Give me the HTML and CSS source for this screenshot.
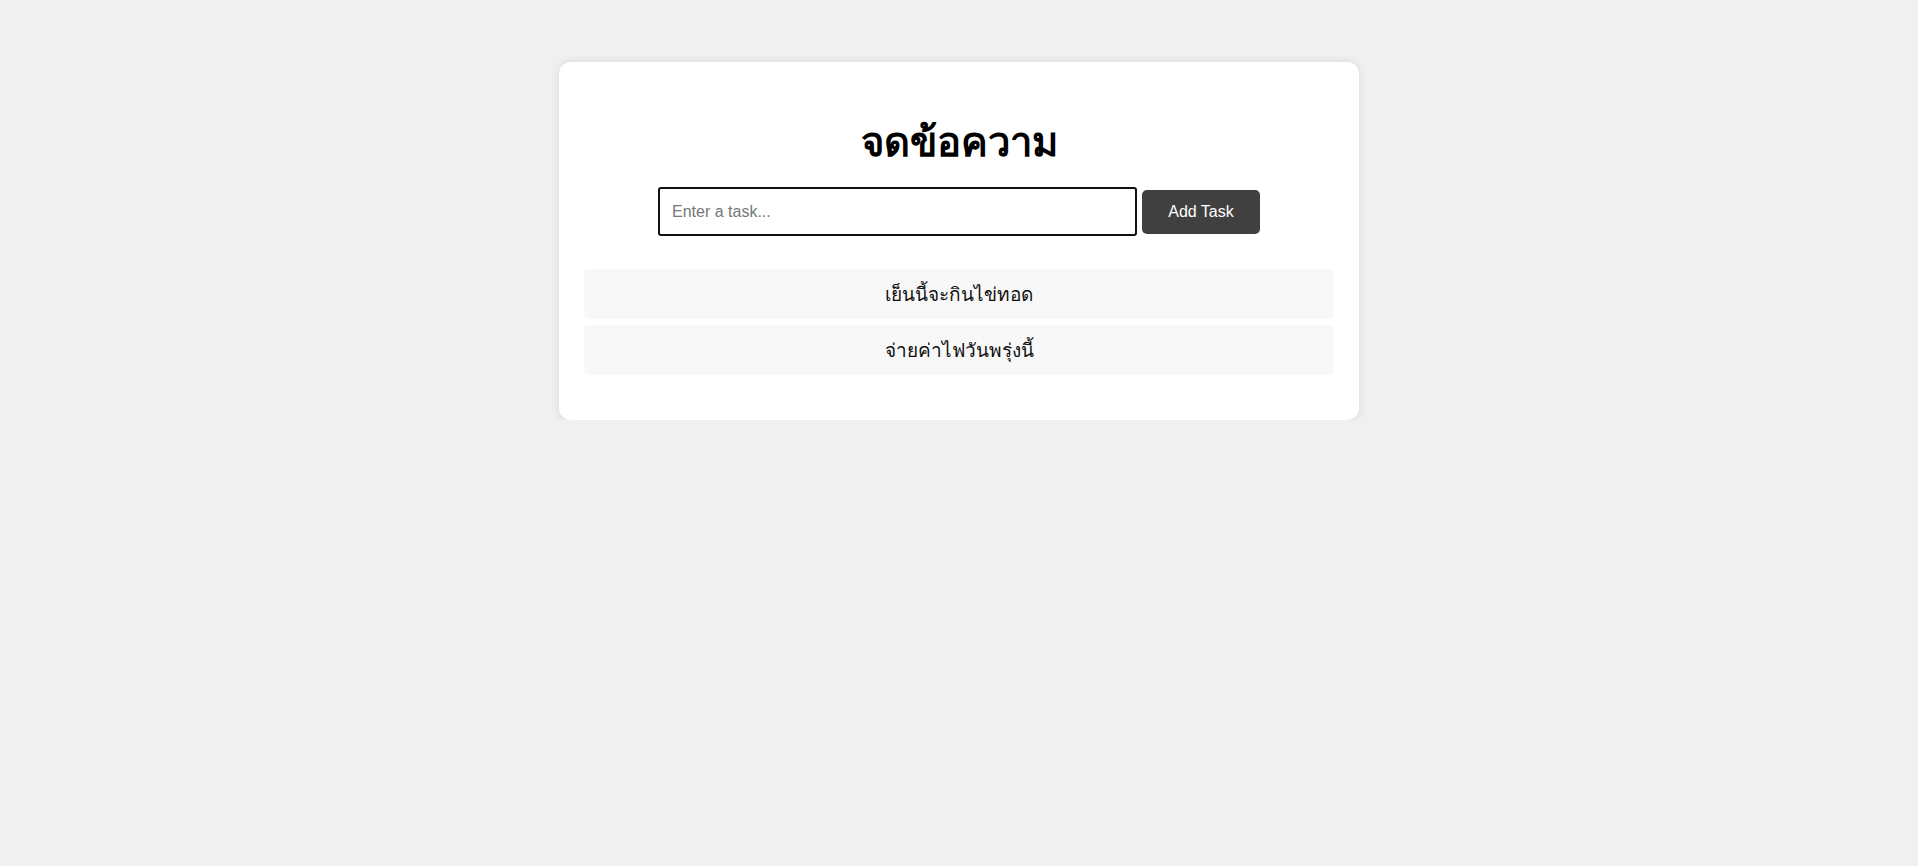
FILE: index.html
```html
<!DOCTYPE html>
<html lang="th">
<head>
<meta charset="utf-8">
<title>จดข้อความ</title>
<link rel="stylesheet" href="styles.css">
</head>
<body>
<main class="card">
  <h1 class="title">จดข้อความ</h1>
  <div class="form-row">
    <input class="task-input" type="text" placeholder="Enter a task...">
    <button class="add-btn" type="button">Add Task</button>
  </div>
  <ul class="task-list">
    <li class="task-item">เย็นนี้จะกินไข่ทอด</li>
    <li class="task-item">จ่ายค่าไฟวันพรุ่งนี้</li>
  </ul>
</main>
</body>
</html>
```

FILE: styles.css
```css
* { box-sizing: border-box; }
body {
  margin: 0;
  padding-top: 62px;
  background: #f0f0f0;
  font-family: "Liberation Sans", Arial, sans-serif;
}
.card {
  width: 800px;
  margin: 0 auto;
  background: #ffffff;
  border-radius: 12px;
  box-shadow: 0 0 10px rgba(0, 0, 0, 0.1);
  padding: 25px 25px 45px;
}
.title {
  margin: 32px 0 22px;
  text-align: center;
  font-size: 40px;
  font-weight: bold;
  color: #000;
  line-height: 1.15;
}
.form-row {
  display: flex;
  justify-content: center;
  align-items: center;
  gap: 5px;
}
.task-input {
  width: 479px;
  height: 49px;
  padding: 0 12px;
  border: 2px solid #111;
  border-radius: 3px;
  font-family: "Liberation Sans", Arial, sans-serif;
  font-size: 16px;
  outline: none;
}
.task-input::placeholder { color: #777; }
.add-btn {
  width: 118px;
  height: 44px;
  background: #404040;
  color: #fff;
  border: none;
  border-radius: 5px;
  font-family: "Liberation Sans", Arial, sans-serif;
  font-size: 16px;
}
.task-list {
  list-style: none;
  margin: 33px 0 0;
  padding: 0;
  display: flex;
  flex-direction: column;
  gap: 6px;
}
.task-item {
  height: 50px;
  display: flex;
  align-items: center;
  justify-content: center;
  background: #f8f8f8;
  border-radius: 5px;
  font-size: 19px;
  color: #111;
}
```
